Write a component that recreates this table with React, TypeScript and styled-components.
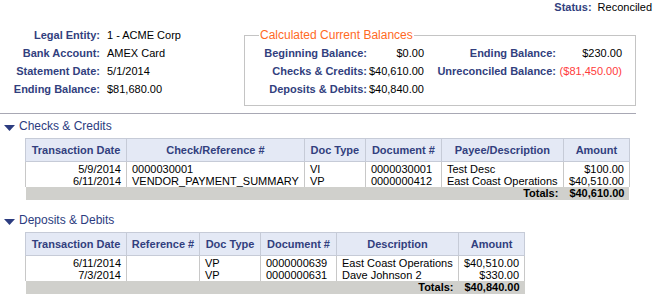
import React from "react";
import styled, { createGlobalStyle } from "styled-components";

const Global = createGlobalStyle`
  html, body { margin: 0; padding: 0; background: #ffffff; }
  body { font-family: "Liberation Sans", Arial, sans-serif; font-size: 11px; color: #000; }
`;

const LABEL = "#323f7e";
const TITLE = "#2c3c80";

const Page = styled.div`
  width: 657px;
  height: 297px;
  overflow: hidden;
`;

const StatusBar = styled.div`
  display: flex;
  justify-content: flex-end;
  gap: 6px;
  padding: 1px 5px 0 0;
  height: 13px;
  line-height: 13px;
`;

const Label = styled.span`
  color: ${LABEL};
  font-weight: bold;
`;

const Value = styled.span<{ $neg?: boolean }>`
  color: ${(p) => (p.$neg ? "#ff3b3b" : "#000")};
`;

const Top = styled.div`
  display: flex;
  align-items: flex-start;
`;

const InfoGrid = styled.div`
  display: grid;
  grid-template-columns: 100px 144px;
  column-gap: 7px;
  width: 244px;
  margin-top: 12px;
  line-height: 18px;
  & > ${Label} { text-align: right; }
`;

const Fieldset = styled.fieldset`
  width: 392px;
  box-sizing: border-box;
  margin: 14px 0 0 0;
  padding: 2px 0 7px 14px;
  border: 1px solid #c4c4c4;
  min-inline-size: 0;
`;

const Legend = styled.legend`
  color: #ff6a1f;
  font-size: 12px;
  line-height: 14px;
  padding: 0 1px;
`;

const BalanceGrid = styled.div`
  display: grid;
  grid-template-columns: 108px 57px 132px 66px;
  line-height: 18px;
  & > * { text-align: right; }
`;

const Rule = styled.div`
  width: 636px;
  height: 1px;
  background: #a8a8b4;
  margin-top: 7px;
`;

const SectionTitle = styled.div<{ $top: number }>`
  display: flex;
  align-items: center;
  gap: 4px;
  margin: ${(p) => p.$top}px 0 5px 4px;
  height: 14px;
  color: ${TITLE};
  font-size: 12px;
`;

const Arrow = styled.svg`
  margin-top: 3px;
`;

const Table = styled.table`
  border-collapse: collapse;
  table-layout: fixed;
  margin-left: 25px;
`;

const Th = styled.th`
  height: 22px;
  padding: 0 3px;
  background: #e4e9f5;
  border: 1px solid #c6cbd7;
  color: ${LABEL};
  font-weight: bold;
  font-size: 11px;
  text-align: center;
  white-space: nowrap;
`;

const Td = styled.td<{ $align?: "left" | "right"; $first?: boolean }>`
  padding: ${(p) => (p.$first ? "1px" : "0")} 5px 0 5px;
  line-height: 12px;
  border-left: 1px solid #c8c8c8;
  border-right: 1px solid #c8c8c8;
  text-align: ${(p) => p.$align || "left"};
  white-space: nowrap;
  overflow: hidden;
`;

const TotalTd = styled.td`
  background: #d0d0cc;
  font-weight: bold;
  text-align: right;
  line-height: 13px;
  height: 13px;
  padding: 0 5px;
  color: #000;
`;

type Col = { title: string; width: number; align?: "left" | "right" };

const checkCols: Col[] = [
  { title: "Transaction Date", width: 101, align: "right" },
  { title: "Check/Reference #", width: 177 },
  { title: "Doc Type", width: 61 },
  { title: "Document #", width: 76 },
  { title: "Payee/Description", width: 122 },
  { title: "Amount", width: 66, align: "right" },
];

const checkRows = [
  ["5/9/2014", "0000030001", "VI", "0000030001", "Test Desc", "$100.00"],
  ["6/11/2014", "VENDOR_PAYMENT_SUMMARY", "VP", "0000000412", "East Coast Operations", "$40,510.00"],
];

const depositCols: Col[] = [
  { title: "Transaction Date", width: 101, align: "right" },
  { title: "Reference #", width: 73 },
  { title: "Doc Type", width: 61 },
  { title: "Document #", width: 76 },
  { title: "Description", width: 122 },
  { title: "Amount", width: 66, align: "right" },
];

const depositRows = [
  ["6/11/2014", "", "VP", "0000000639", "East Coast Operations", "$40,510.00"],
  ["7/3/2014", "", "VP", "0000000631", "Dave Johnson 2", "$330.00"],
];

function DataTable({ cols, rows, total }: { cols: Col[]; rows: string[][]; total: string }) {
  return (
    <Table>
      <colgroup>
        {cols.map((c) => (
          <col key={c.title} style={{ width: c.width }} />
        ))}
      </colgroup>
      <thead>
        <tr>
          {cols.map((c) => (
            <Th key={c.title}>{c.title}</Th>
          ))}
        </tr>
      </thead>
      <tbody>
        {rows.map((r, i) => (
          <tr key={i}>
            {r.map((v, j) => (
              <Td key={j} $align={cols[j].align} $first={i === 0}>
                {v}
              </Td>
            ))}
          </tr>
        ))}
        <tr>
          <TotalTd colSpan={cols.length - 1}>Totals:</TotalTd>
          <TotalTd>{total}</TotalTd>
        </tr>
      </tbody>
    </Table>
  );
}

function Section({ title, top }: { title: string; top: number }) {
  return (
    <SectionTitle $top={top}>
      <Arrow width="11" height="6" viewBox="0 0 11 6">
        <polygon points="0,0 11,0 5.5,6" fill={TITLE} />
      </Arrow>
      <span>{title}</span>
    </SectionTitle>
  );
}

export default function App() {
  return (
    <Page>
      <Global />
      <StatusBar>
        <Label>Status:</Label>
        <Value>Reconciled</Value>
      </StatusBar>
      <Top>
        <InfoGrid>
          <Label>Legal Entity:</Label>
          <Value>1 - ACME Corp</Value>
          <Label>Bank Account:</Label>
          <Value>AMEX Card</Value>
          <Label>Statement Date:</Label>
          <Value>5/1/2014</Value>
          <Label>Ending Balance:</Label>
          <Value>$81,680.00</Value>
        </InfoGrid>
        <Fieldset>
          <Legend>Calculated Current Balances</Legend>
          <BalanceGrid>
            <Label>Beginning Balance:</Label>
            <Value>$0.00</Value>
            <Label>Ending Balance:</Label>
            <Value>$230.00</Value>
            <Label>Checks &amp; Credits:</Label>
            <Value>$40,610.00</Value>
            <Label>Unreconciled Balance:</Label>
            <Value $neg>($81,450.00)</Value>
            <Label>Deposits &amp; Debits:</Label>
            <Value>$40,840.00</Value>
          </BalanceGrid>
        </Fieldset>
      </Top>
      <Rule />
      <Section title="Checks & Credits" top={5} />
      <DataTable cols={checkCols} rows={checkRows} total="$40,610.00" />
      <Section title="Deposits & Debits" top={13} />
      <DataTable cols={depositCols} rows={depositRows} total="$40,840.00" />
    </Page>
  );
}
